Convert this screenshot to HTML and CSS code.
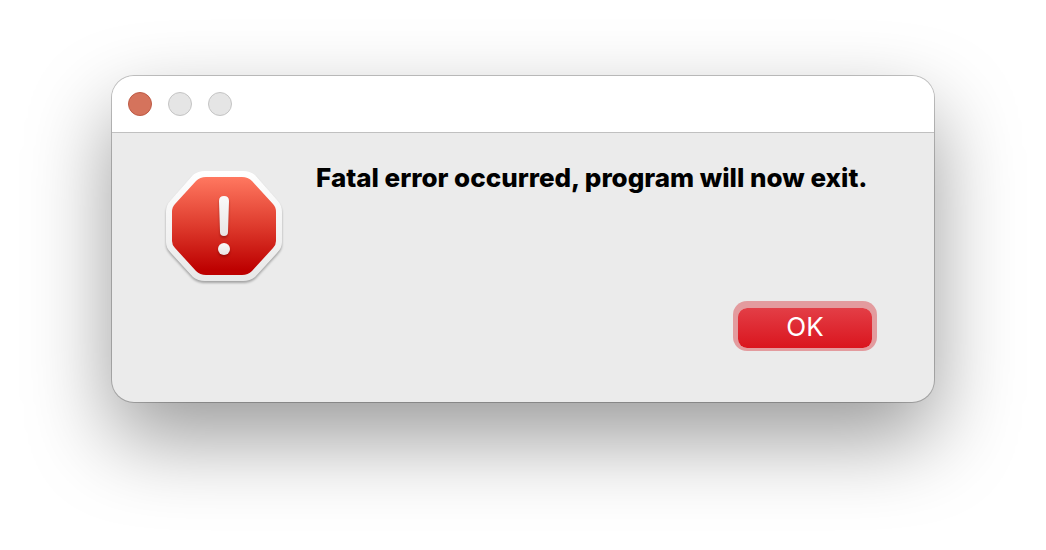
FILE: index.html
```html
<!DOCTYPE html>
<html lang="en">
<head>
<meta charset="utf-8">
<title>Error</title>
<link rel="stylesheet" href="styles.css">
</head>
<body>
<main class="dialog" role="alertdialog" aria-labelledby="message">
  <header class="titlebar">
    <button class="light light-close" type="button" aria-label="Close"></button>
    <button class="light" type="button" aria-label="Minimize" disabled></button>
    <button class="light" type="button" aria-label="Zoom" disabled></button>
  </header>
  <div class="content">
    <svg class="icon" viewBox="0 0 124 120" aria-hidden="true">
      <defs>
        <linearGradient id="red" x1="0" y1="0" x2="0" y2="1">
          <stop offset="0" stop-color="#ff7860"/>
          <stop offset="0.5" stop-color="#de3b2d"/>
          <stop offset="0.95" stop-color="#bd0000"/>
        </linearGradient>
        <linearGradient id="plate" x1="0" y1="0" x2="0" y2="1">
          <stop offset="0" stop-color="#fff"/>
          <stop offset="1" stop-color="#e8e8e8"/>
        </linearGradient>
        <linearGradient id="mark" x1="0" y1="0" x2="0" y2="1">
          <stop offset="0" stop-color="#fafafa"/>
          <stop offset="1" stop-color="#e8e4e4"/>
        </linearGradient>
      </defs>
      <path class="plate" fill="url(#plate)" d="M43 4H81Q88 4 93 8L115 33Q120 38 120 45V75Q120 81 115 86L93 110Q88 114 81 114H43Q36 114 31 110L9 86Q4 81 4 75V45Q4 38 9 33L31 8Q36 4 43 4Z"/>
      <path fill="url(#red)" d="M44 10H80Q86 10 90 14L111 37Q114 40 114 45V74Q114 78 111 81L90 104Q86 108 80 108H44Q38 108 34 104L13 81Q10 78 10 74V45Q10 40 13 37L34 14Q38 10 44 10Z"/>
      <g class="mark" fill="url(#mark)">
        <path d="M57 34Q57 29 62 29T67 34L66 65Q66 69 62 69T58 65Z"/>
        <circle cx="62" cy="82" r="6"/>
      </g>
    </svg>
    <div class="body">
      <h1 class="message" id="message">Fatal error occurred, program will now exit.</h1>
      <button class="ok" type="button">OK</button>
    </div>
  </div>
</main>
</body>
</html>
```
FILE: styles.css
```css
* {
  box-sizing: border-box;
}

body {
  margin: 0;
  padding: 76px 112px 148px;
  background: #fff;
  font-family: Inter, "Liberation Sans", sans-serif;
}

.dialog {
  border-radius: 22px;
  background: #ebebeb;
  box-shadow: 0 0 0 1px rgba(0, 0, 0, 0.22), 0 36px 84px rgba(0, 0, 0, 0.4);
  overflow: hidden;
}

.titlebar {
  display: flex;
  align-items: center;
  gap: 16px;
  height: 57px;
  padding: 0 16px;
  border-bottom: 1px solid #c0c0c0;
  background: #fff;
}

.light {
  width: 24px;
  height: 24px;
  padding: 0;
  border: 1px solid #c4c4c4;
  border-radius: 50%;
  background: #e5e5e5;
}

.light-close {
  border-color: #bd5a45;
  background: #d5735c;
}

.content {
  display: flex;
  gap: 30px;
  padding: 28px 62px 54px 50px;
}

.icon {
  flex: none;
  width: 124px;
  height: 120px;
  margin-top: 6px;
  overflow: visible;
}

.plate {
  filter: drop-shadow(0 2px 1px rgba(0, 0, 0, 0.3));
}

.mark {
  filter: drop-shadow(0 2px 1px rgba(90, 0, 0, 0.4));
}

.body {
  display: flex;
  flex: 1;
  flex-direction: column;
  align-items: flex-end;
}

.message {
  align-self: flex-start;
  margin: 0 0 113px;
  font-size: 26px;
  font-weight: 800;
  line-height: 34px;
  white-space: nowrap;
}

.ok {
  width: 134px;
  height: 40px;
  padding: 0 0 2px;
  border: 0;
  border-radius: 9px;
  background: linear-gradient(#e33e46, #da151e);
  box-shadow: 0 -2px 0 5px #e39b9e;
  color: #fff;
  font-family: inherit;
  font-size: 26px;
  line-height: 38px;
}
```
